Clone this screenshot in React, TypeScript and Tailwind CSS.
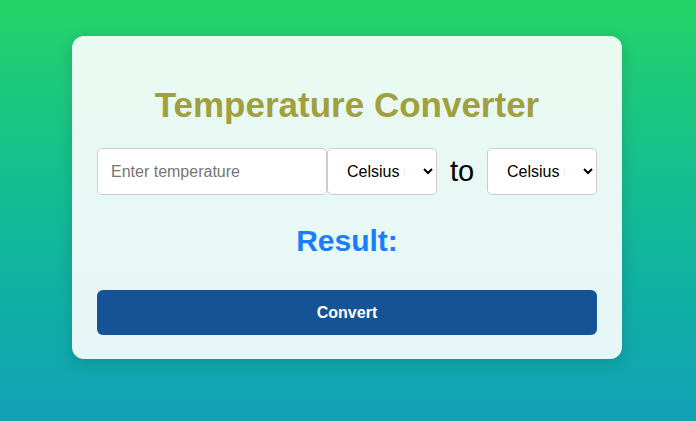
export default function App() {
  return (
    <main
      className="min-h-[421px] w-full bg-gradient-to-b from-[#25d366] to-[#13a0b7] pt-[36px]"
      style={{ fontFamily: '"Liberation Sans", Arial, sans-serif' }}
    >
      <div className="ml-[72px] w-[550px] rounded-[12px] bg-white/90 px-[25px] pt-[49px] pb-[24px] shadow-[0_4px_16px_rgba(0,0,0,0.15)]">
        <h1 className="text-center text-[35px] font-bold leading-[39px] text-[#a0a03c]">
          Temperature Converter
        </h1>

        <div className="mt-[24px] flex items-center">
          <input
            type="number"
            placeholder="Enter temperature"
            className="h-[47px] w-[230px] rounded-[5px] border border-[#cccccc] bg-white px-[13px] text-[16px] text-black placeholder:text-[#757575] outline-none"
          />
          <select className="h-[47px] w-[110px] rounded-[5px] border border-[#cccccc] bg-white px-[15px] text-[16px] text-black">
            <option>Celsius (°C)</option>
            <option>Fahrenheit (°F)</option>
            <option>Kelvin (K)</option>
          </select>
          <span className="mx-auto text-[29px] text-black">to</span>
          <select className="h-[47px] w-[110px] rounded-[5px] border border-[#cccccc] bg-white px-[15px] text-[16px] text-black">
            <option>Celsius (°C)</option>
            <option>Fahrenheit (°F)</option>
            <option>Kelvin (K)</option>
          </select>
        </div>

        <h2 className="mt-[29px] text-center text-[30px] font-bold leading-[34px] text-[#1a7cff]">
          Result:
        </h2>

        <button className="mt-[32px] h-[45px] w-full rounded-[6px] bg-[#165396] text-[16px] font-bold text-white">
          Convert
        </button>
      </div>
    </main>
  )
}
